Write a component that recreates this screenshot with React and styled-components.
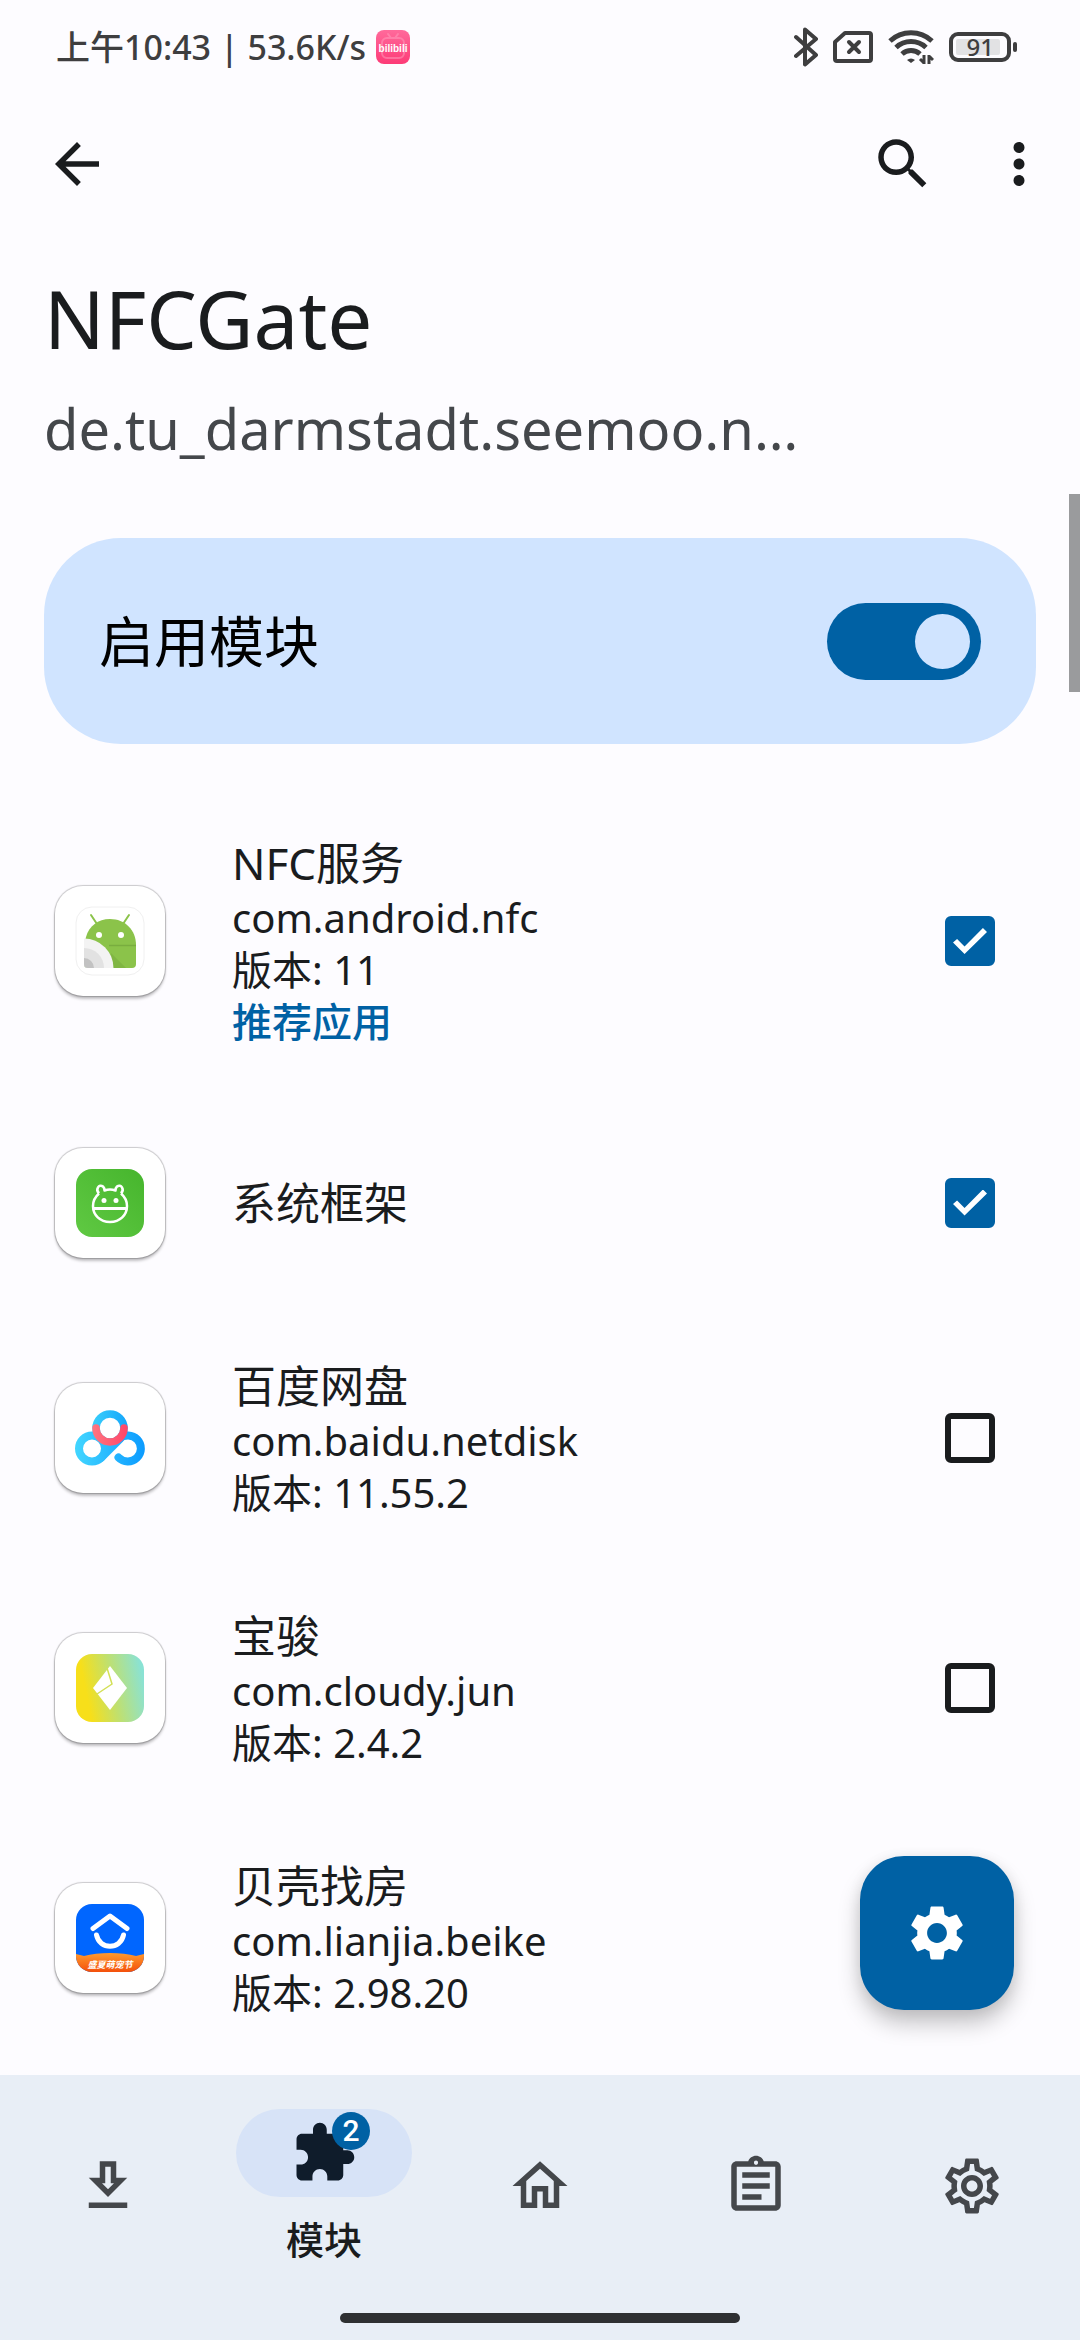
import React, { useState } from 'react';
import styled, { createGlobalStyle, css } from 'styled-components';

const color = {
  surface: '#fdfcff',
  text: '#1a1c1e',
  muted: '#44474b',
  primary: '#0061a4',
  container: '#d0e4ff',
  nav: '#e8eef6',
  pill: '#d7e3f7',
};

const GlobalStyle = createGlobalStyle`
  *, *::before, *::after { box-sizing: border-box; }
  body {
    margin: 0;
    background: ${color.surface};
    color: ${color.text};
    font-family: "Noto Sans", "Noto Sans CJK SC", sans-serif;
  }
  button { border: 0; padding: 0; background: none; font: inherit; color: inherit; cursor: pointer; }
  h1, h2, p, ul { margin: 0; padding: 0; }
`;

const Screen = styled.div`
  min-height: 100vh;
  display: flex;
  flex-direction: column;
`;

const StatusBar = styled.div`
  height: 94px;
  padding: 0 63px 0 56px;
  display: flex;
  align-items: center;
  justify-content: space-between;
  color: #3e3e3f;
`;

const StatusGroup = styled.div`
  display: flex;
  align-items: center;
  gap: ${(p) => p.$gap}px;
  font-size: 34px;
  line-height: 40px;
  font-weight: 500;
  white-space: nowrap;
`;

const Battery = styled.div`
  display: flex;
  align-items: center;
  gap: 2px;
  &::after {
    content: '';
    width: 4px;
    height: 10px;
    border-radius: 2px;
    background: currentColor;
  }
`;

const BatteryCell = styled.div`
  width: 62px;
  height: 30px;
  border: 4px solid currentColor;
  border-radius: 9px;
  padding: 3px;
  display: flex;
`;

const BatteryLevel = styled.div`
  width: 44px;
  border-radius: 2px;
  background: #e2e2e4;
  display: flex;
  align-items: center;
  justify-content: flex-end;
  padding-right: 6px;
  font-size: 24px;
  line-height: 16px;
`;

const Toolbar = styled.div`
  height: 140px;
  padding: 0 28px 0 44px;
  display: flex;
  align-items: center;
  gap: 50px;
`;

const IconButton = styled.button`
  width: 66px;
  height: 66px;
  display: grid;
  place-items: center;
  ${(p) => p.$first && css`margin-right: auto;`}
`;

const Glyph = styled.svg`
  width: 66px;
  height: 66px;
  display: block;
  fill: currentColor;
`;

const Heading = styled.header`
  padding: 38px 44px 0;
  display: flex;
  flex-direction: column;
  gap: 28px;
`;

const Title = styled.h1`
  font-size: 80px;
  line-height: 92px;
  font-weight: 400;
`;

const Subtitle = styled.p`
  font-size: 56px;
  line-height: 72px;
  color: ${color.muted};
`;

const Main = styled.main`
  position: relative;
  flex: 1;
  display: flex;
  flex-direction: column;
`;

const EnableCard = styled.label`
  margin: 74px 44px 46px;
  height: 206px;
  padding: 0 55px;
  border-radius: 77px;
  background: ${color.container};
  color: #000;
  display: flex;
  align-items: center;
  justify-content: space-between;
  font-size: 55px;
  line-height: 64px;
  cursor: pointer;
`;

const Switch = styled.input`
  appearance: none;
  margin: 0;
  width: 154px;
  height: 77px;
  padding: 11px;
  border-radius: 39px;
  background: #74777f;
  display: flex;
  cursor: pointer;
  &::before {
    content: '';
    width: 55px;
    height: 55px;
    border-radius: 50%;
    background: ${color.container};
  }
  &:checked {
    background: ${color.primary};
    justify-content: flex-end;
  }
`;

const AppList = styled.ul`
  list-style: none;
`;

const AppRow = styled.label`
  min-height: 221px;
  padding: 44px 85px 44px 55px;
  display: flex;
  align-items: center;
  cursor: pointer;
`;

const AppTile = styled.div`
  width: 110px;
  height: 110px;
  margin-right: 67px;
  border-radius: 28px;
  background: #fff;
  display: grid;
  place-items: center;
  box-shadow: 0 0 1px 1px rgba(0, 0, 0, 0.2), 0 3px 3px rgba(0, 0, 0, 0.24);
`;

const AppArt = styled.svg`
  width: 68px;
  height: 68px;
  display: block;
  overflow: visible;
`;

const AppInfo = styled.div`
  flex: 1;
  min-width: 0;
  display: flex;
  flex-direction: column;
`;

const AppName = styled.h2`
  font-size: 44px;
  line-height: 58px;
  font-weight: 400;
`;

const AppLine = styled.p`
  font-size: 40px;
  line-height: 52px;
  ${(p) => p.$recommended && css`
    color: ${color.primary};
    font-weight: 500;
  `}
`;

const Checkbox = styled.input`
  appearance: none;
  margin: 0;
  width: 50px;
  height: 50px;
  border: 6px solid ${color.text};
  border-radius: 6px;
  display: grid;
  place-items: center;
  cursor: pointer;
  &:checked {
    border-color: ${color.primary};
    background: ${color.primary};
  }
  &:checked::before {
    content: '';
    width: 34px;
    height: 26px;
    background: #fff;
    clip-path: polygon(0 56%, 12% 42%, 34% 71%, 88% 0, 100% 15%, 34% 100%);
  }
`;

const ScrollThumb = styled.div`
  position: absolute;
  top: 30px;
  right: 0;
  width: 11px;
  height: 198px;
  background: #9a9b9d;
`;

const Fab = styled.button`
  && {
    position: absolute;
    right: 66px;
    bottom: 65px;
    width: 154px;
    height: 154px;
    border-radius: 44px;
    background: ${color.primary};
    color: #fff;
    display: grid;
    place-items: center;
    box-shadow: 0 14px 22px rgba(0, 0, 0, 0.22), 0 2px 14px rgba(0, 0, 0, 0.08);
  }
`;

const BottomBar = styled.footer`
  background: ${color.nav};
  padding-bottom: 17px;
  display: flex;
  flex-direction: column;
  align-items: center;
`;

const Tabs = styled.nav`
  width: 100%;
  height: 238px;
  display: grid;
  grid-template-columns: repeat(5, 1fr);
`;

const Tab = styled.button`
  && {
    height: 222px;
    color: ${(p) => (p.$active ? color.text : color.muted)};
    display: flex;
    flex-direction: column;
    align-items: center;
    justify-content: center;
    gap: 18px;
    font-size: 38px;
    line-height: 48px;
    font-weight: 500;
  }
`;

const Pill = styled.span`
  position: relative;
  width: 176px;
  height: 88px;
  border-radius: 44px;
  background: ${color.pill};
  color: #0f1c2b;
  display: grid;
  place-items: center;
`;

const Badge = styled.span`
  position: absolute;
  top: 3px;
  left: 96px;
  width: 38px;
  height: 38px;
  border-radius: 50%;
  background: ${color.primary};
  color: #fff;
  font-family: Roboto, sans-serif;
  font-size: 30px;
  line-height: 38px;
  text-align: center;
`;

const HomeIndicator = styled.div`
  width: 400px;
  max-width: 40%;
  height: 10px;
  border-radius: 5px;
  background: #2e3032;
`;

const paths = {
  back: 'M20 11H7.83l5.59-5.59L12 4l-8 8 8 8 1.41-1.41L7.83 13H20v-2z',
  search:
    'M15.5 14h-.79l-.28-.27C15.41 12.59 16 11.11 16 9.5 16 5.91 13.09 3 9.5 3S3 5.91 3 9.5 5.91 16 9.5 16c1.61 0 3.09-.59 4.23-1.57l.27.28v.79l5 4.99L20.49 19l-4.99-5zm-6 0C7.01 14 5 11.99 5 9.5S7.01 5 9.5 5 14 7.01 14 9.5 11.99 14 9.5 14z',
  more:
    'M12 8c1.1 0 2-.9 2-2s-.9-2-2-2-2 .9-2 2 .9 2 2 2zm0 2c-1.1 0-2 .9-2 2s.9 2 2 2 2-.9 2-2-.9-2-2-2zm0 6c-1.1 0-2 .9-2 2s.9 2 2 2 2-.9 2-2-.9-2-2-2z',
  gear:
    'M19.14 12.94c.04-.3.06-.61.06-.94 0-.32-.02-.64-.07-.94l2.03-1.58c.18-.14.23-.41.12-.61l-1.92-3.32c-.12-.22-.37-.29-.59-.22l-2.39.96c-.5-.38-1.03-.7-1.62-.94l-.36-2.54c-.04-.24-.24-.41-.48-.41h-3.84c-.24 0-.43.17-.47.41l-.36 2.54c-.59.24-1.13.57-1.62.94l-2.39-.96c-.22-.08-.47 0-.59.22L2.74 8.87c-.12.21-.08.47.12.61l2.03 1.58c-.05.3-.09.63-.09.94s.02.64.07.94l-2.03 1.58c-.18.14-.23.41-.12.61l1.92 3.32c.12.22.37.29.59.22l2.39-.96c.5.38 1.03.7 1.62.94l.36 2.54c.05.24.24.41.48.41h3.84c.24 0 .44-.17.47-.41l.36-2.54c.59-.24 1.13-.56 1.62-.94l2.39.96c.22.08.47 0 .59-.22l1.92-3.32c.12-.22.07-.47-.12-.61l-2.01-1.58zM12 15.6c-1.98 0-3.6-1.62-3.6-3.6s1.62-3.6 3.6-3.6 3.6 1.62 3.6 3.6-1.62 3.6-3.6 3.6z',
  download: 'M19 9h-4V3H9v6H5l7 7 7-7zm-8 2V5h2v6h1.17L12 13.17 9.83 11H11zm-6 7h14v2H5z',
  extension:
    'M20.5 11H19V7c0-1.1-.9-2-2-2h-4V3.5C13 2.12 11.88 1 10.5 1S8 2.12 8 3.5V5H4c-1.1 0-1.99.9-1.99 2v3.8H3.5c1.49 0 2.7 1.21 2.7 2.7s-1.21 2.7-2.7 2.7H2V20c0 1.1.9 2 2 2h3.8v-1.5c0-1.49 1.21-2.7 2.7-2.7 1.49 0 2.7 1.21 2.7 2.7V22H17c1.1 0 2-.9 2-2v-4h1.5c1.38 0 2.5-1.12 2.5-2.5S21.88 11 20.5 11z',
  home: 'M12 5.69l5 4.5V18h-2v-6H9v6H7v-7.81l5-4.5M12 3L2 12h3v8h6v-6h2v6h6v-8h3L12 3z',
  logs:
    'M7 15h7v2H7zm0-4h10v2H7zm0-4h10v2H7zm12-4h-4.18C14.4 1.84 13.3 1 12 1c-1.3 0-2.4.84-2.82 2H5c-1.1 0-2 .9-2 2v14c0 1.1.9 2 2 2h14c1.1 0 2-.9 2-2V5c0-1.1-.9-2-2-2zm-7-.25c.41 0 .75.34.75.75s-.34.75-.75.75-.75-.34-.75-.75.34-.75.75-.75zM19 19H5V5h14v14z',
  gearOutline:
    'M19.43 12.98c.04-.32.07-.64.07-.98 0-.34-.03-.66-.07-.98l2.11-1.65c.19-.15.24-.42.12-.64l-2-3.46c-.09-.16-.26-.25-.44-.25-.06 0-.12.01-.17.03l-2.49 1c-.52-.4-1.08-.73-1.69-.98l-.38-2.65C14.46 2.18 14.25 2 14 2h-4c-.25 0-.46.18-.49.42l-.38 2.65c-.61.25-1.17.59-1.69.98l-2.49-1c-.06-.02-.12-.03-.18-.03-.17 0-.34.09-.43.25l-2 3.46c-.13.22-.07.49.12.64l2.11 1.65c-.04.32-.07.65-.07.98 0 .33.03.66.07.98l-2.11 1.65c-.19.15-.24.42-.12.64l2 3.46c.09.16.26.25.44.25.06 0 .12-.01.17-.03l2.49-1c.52.4 1.08.73 1.69.98l.38 2.65c.03.24.24.42.49.42h4c.25 0 .46-.18.49-.42l.38-2.65c.61-.25 1.17-.59 1.69-.98l2.49 1c.06.02.12.03.18.03.17 0 .34-.09.43-.25l2-3.46c.12-.22.07-.49-.12-.64l-2.11-1.65zm-1.98-1.71c.04.31.05.52.05.73 0 .21-.02.43-.05.73l-.14 1.13.89.7 1.08.84-.7 1.21-1.27-.51-1.04-.42-.9.68c-.43.32-.84.56-1.25.73l-1.06.43-.16 1.13-.2 1.35h-1.4l-.19-1.35-.16-1.13-1.06-.43c-.43-.18-.83-.41-1.23-.71l-.91-.7-1.06.43-1.27.51-.7-1.21 1.08-.84.89-.7-.14-1.13c-.03-.31-.05-.54-.05-.74s.02-.43.05-.73l.14-1.13-.89-.7-1.08-.84.7-1.21 1.27.51 1.04.42.9-.68c.43-.32.84-.56 1.25-.73l1.06-.43.16-1.13.2-1.35h1.39l.19 1.35.16 1.13 1.06.43c.43.18.83.41 1.23.71l.91.7 1.06-.43 1.27-.51.7 1.21-1.07.85-.89.7.14 1.13zM12 8c-2.21 0-4 1.79-4 4s1.79 4 4 4 4-1.79 4-4-1.79-4-4-4zm0 6c-1.1 0-2-.9-2-2s.9-2 2-2 2 .9 2 2-.9 2-2 2z',
};

const Icon = ({ name }) => (
  <Glyph viewBox="0 0 24 24" aria-hidden="true">
    <path d={paths[name]} />
  </Glyph>
);

const BilibiliIcon = () => (
  <svg width="34" height="34" viewBox="0 0 34 34" aria-hidden="true">
    <defs>
      <linearGradient id="bili" x1="0" y1="0" x2="0" y2="1">
        <stop offset="0" stopColor="#ff6a9b" />
        <stop offset="1" stopColor="#fd3b77" />
      </linearGradient>
    </defs>
    <rect width="34" height="34" rx="8" fill="url(#bili)" />
    <g fill="none" stroke="#ff9fbf" strokeWidth="2" opacity="0.5" strokeLinecap="round">
      <rect x="6" y="8" width="22" height="20" rx="5" />
      <path d="M12 4l3 4M22 4l-3 4" />
    </g>
    <text x="17" y="22" fill="#fff" fontSize="10" fontWeight="700" textAnchor="middle" fontFamily="Liberation Sans, sans-serif">
      bilibili
    </text>
  </svg>
);

const BluetoothIcon = () => (
  <svg width="24" height="40" viewBox="0 0 24 40" fill="none" stroke="currentColor" strokeWidth="4" strokeLinecap="round" strokeLinejoin="round" aria-hidden="true">
    <path d="M2 10l20 18-11 9.500V2.500L22 12 2 29" />
  </svg>
);

const NoSimIcon = () => (
  <svg width="40" height="32" viewBox="0 0 40 32" fill="none" stroke="currentColor" strokeWidth="4" strokeLinejoin="round" aria-hidden="true">
    <path d="M12 2h24a2 2 0 0 1 2 2v24a2 2 0 0 1-2 2H4a2 2 0 0 1-2-2V11z" />
    <path d="M16 11l10 10M26 11L16 21" strokeLinecap="round" />
  </svg>
);

const WifiIcon = () => (
  <svg width="46" height="36" viewBox="0 0 46 36" fill="none" stroke="currentColor" strokeWidth="5" aria-hidden="true">
    <path d="M2 12a31 31 0 0 1 42 0" />
    <path d="M8 18.500a22 22 0 0 1 30 0" />
    <path d="M14 25a13.500 13.500 0 0 1 18 0" />
    <path d="M19 31a6 6 0 0 1 8 0l-4 3z" fill="currentColor" stroke="none" />
    <path d="M36 26v9M41 35v-9M36 34l-4-4M41 27l4 4" strokeWidth="3" />
  </svg>
);

const NfcArt = () => (
  <AppArt viewBox="0 0 68 68" aria-hidden="true">
    <rect x="0" y="0" width="68" height="68" rx="16" fill="#fff" stroke="#f0f0f0" />
    <path d="M15 8l6 9M53 8l-6 9" stroke="#8bc34a" strokeWidth="2" strokeLinecap="round" />
    <path d="M10 30C13 19 22 12 34 12c15 0 26 11 26 26v19a4 4 0 0 1-4 4H12a4 4 0 0 1-4-4V38z" fill="#8bc34a" />
    <path d="M33 38.500h27" stroke="#79ad3f" strokeWidth="1.500" />
    <path d="M35 46l15 15H36z" fill="#79ad3f" opacity="0.6" />
    <path d="M8 31.500A29.500 29.500 0 0 1 37.500 61H12a4 4 0 0 1-4-4z" fill="#f3f3f3" />
    <path d="M8 41a20 20 0 0 1 20 20H12a4 4 0 0 1-4-4z" fill="#e2e2e2" />
    <path d="M8 51a10 10 0 0 1 10 10h-6a4 4 0 0 1-4-4z" fill="#c2c2c2" />
    <circle cx="23" cy="28" r="3" fill="#fff" />
    <circle cx="45" cy="28" r="3" fill="#fff" />
  </AppArt>
);

const SystemArt = () => (
  <AppArt viewBox="0 0 68 68" aria-hidden="true">
    <defs>
      <linearGradient id="system" x1="0" y1="1" x2="1" y2="0">
        <stop offset="0" stopColor="#60c943" />
        <stop offset="1" stopColor="#46b52d" />
      </linearGradient>
    </defs>
    <rect width="68" height="68" rx="16" fill="url(#system)" />
    <g fill="none" stroke="#fff" strokeWidth="2.500">
      <path d="M23 24.500C19 28 17 32 17 37c0 9 7 16 17 16s17-7 17-16c0-5-2-9-6-12.500" />
      <path d="M23 24.500c-4-4 0-10 4-7 1 1 1.500 2 1.500 4 4-1.500 7-1.500 11 0 0-2 .5-3 1.500-4 4-3 8 3 4 7" strokeLinejoin="round" />
      <path d="M17 39.500h34" strokeWidth="3" />
    </g>
    <circle cx="28" cy="31.500" r="2.500" fill="#fff" />
    <circle cx="40" cy="31.500" r="2.500" fill="#fff" />
  </AppArt>
);

const NetdiskArt = () => (
  <AppArt viewBox="0 0 68 68" fill="none" aria-hidden="true">
    <defs>
      <linearGradient id="cloud" x1="-1" y1="0" x2="69" y2="0" gradientUnits="userSpaceOnUse">
        <stop offset="0" stopColor="#42d6ff" />
        <stop offset="1" stopColor="#0b9bff" />
      </linearGradient>
      <linearGradient id="ring" x1="16" y1="0" x2="52" y2="0" gradientUnits="userSpaceOnUse">
        <stop offset="0" stopColor="#3ad0fb" />
        <stop offset="1" stopColor="#14a5fb" />
      </linearGradient>
      <linearGradient id="smile" x1="16" y1="0" x2="52" y2="0" gradientUnits="userSpaceOnUse">
        <stop offset="0" stopColor="#ff7580" />
        <stop offset="1" stopColor="#ff4568" />
      </linearGradient>
    </defs>
    <g stroke="url(#cloud)" strokeWidth="8" strokeLinecap="round">
      <circle cx="16" cy="44.500" r="13" />
      <path d="M25 54l19-19" />
      <path d="M42.500 53.500A13 13 0 1 0 43 35" />
    </g>
    <circle cx="34" cy="24" r="14" fill="#fff" stroke="url(#ring)" strokeWidth="7.500" />
    <path d="M20 24a14 14 0 0 0 28 0" stroke="url(#smile)" strokeWidth="7.500" strokeLinecap="round" />
  </AppArt>
);

const BaojunArt = () => (
  <AppArt viewBox="0 0 68 68" aria-hidden="true">
    <defs>
      <linearGradient id="baojun" x1="0" y1="0.600" x2="1" y2="0.400">
        <stop offset="0.150" stopColor="#f7df1a" />
        <stop offset="0.550" stopColor="#bfe070" />
        <stop offset="1" stopColor="#8ae2d4" />
      </linearGradient>
    </defs>
    <rect width="68" height="68" rx="16" fill="url(#baojun)" />
    <path d="M34 12l17 22-17 22-17-22z" fill="#fff" />
    <path d="M31 14l5 16-15 10" fill="none" stroke="#d3e056" strokeWidth="1.500" />
  </AppArt>
);

const BeikeArt = () => (
  <AppArt viewBox="0 0 68 68" aria-hidden="true">
    <defs>
      <clipPath id="beike-clip">
        <rect width="68" height="68" rx="16" />
      </clipPath>
      <linearGradient id="beike-band" x1="0" y1="0" x2="0" y2="1">
        <stop offset="0" stopColor="#ff9a2e" />
        <stop offset="1" stopColor="#f4500b" />
      </linearGradient>
    </defs>
    <g clipPath="url(#beike-clip)">
      <rect width="68" height="68" fill="#0066ff" />
      <path d="M0 50l8 2c14-4 38-4 52 0l8-2v18H0z" fill="url(#beike-band)" />
    </g>
    <g fill="none" stroke="#fff" strokeWidth="5" strokeLinecap="round" strokeLinejoin="round">
      <path d="M17 24.500L34 12l17 12.500" />
      <path d="M20.500 31c3 15 24 15 27 0" />
    </g>
    <text x="34" y="63.500" fill="#fff" fontSize="9" fontWeight="700" fontStyle="italic" textAnchor="middle" fontFamily="Noto Sans CJK SC, sans-serif">
      盛夏萌宠节
    </text>
  </AppArt>
);

const apps = [
  { name: 'NFC服务', pkg: 'com.android.nfc', version: '11', recommended: true, enabled: true, Art: NfcArt },
  { name: '系统框架', enabled: true, Art: SystemArt },
  { name: '百度网盘', pkg: 'com.baidu.netdisk', version: '11.55.2', Art: NetdiskArt },
  { name: '宝骏', pkg: 'com.cloudy.jun', version: '2.4.2', Art: BaojunArt },
  { name: '贝壳找房', pkg: 'com.lianjia.beike', version: '2.98.20', Art: BeikeArt },
];

const tabs = [
  { icon: 'download', title: '仓库' },
  { icon: 'extension', title: '模块', badge: 2 },
  { icon: 'home', title: '主页' },
  { icon: 'logs', title: '日志' },
  { icon: 'gearOutline', title: '设置' },
];

export default function App() {
  const [active, setActive] = useState('extension');

  return (
    <Screen>
      <GlobalStyle />
      <StatusBar>
        <StatusGroup $gap={10}>
          <span>上午10:43 | 53.6K/s</span>
          <BilibiliIcon />
        </StatusGroup>
        <StatusGroup $gap={15}>
          <BluetoothIcon />
          <NoSimIcon />
          <WifiIcon />
          <Battery>
            <BatteryCell>
              <BatteryLevel>91</BatteryLevel>
            </BatteryCell>
          </Battery>
        </StatusGroup>
      </StatusBar>
      <Toolbar>
        <IconButton $first aria-label="返回"><Icon name="back" /></IconButton>
        <IconButton aria-label="搜索"><Icon name="search" /></IconButton>
        <IconButton aria-label="更多"><Icon name="more" /></IconButton>
      </Toolbar>
      <Heading>
        <Title>NFCGate</Title>
        <Subtitle>de.tu_darmstadt.seemoo.n…</Subtitle>
      </Heading>
      <Main>
        <EnableCard>
          启用模块
          <Switch type="checkbox" role="switch" defaultChecked />
        </EnableCard>
        <AppList>
          {apps.map(({ name, pkg, version, recommended, enabled, Art }) => (
            <li key={name}>
              <AppRow>
                <AppTile><Art /></AppTile>
                <AppInfo>
                  <AppName>{name}</AppName>
                  {pkg && <AppLine>{pkg}</AppLine>}
                  {version && <AppLine>版本: {version}</AppLine>}
                  {recommended && <AppLine $recommended>推荐应用</AppLine>}
                </AppInfo>
                <Checkbox type="checkbox" defaultChecked={enabled} />
              </AppRow>
            </li>
          ))}
        </AppList>
        <ScrollThumb />
        <Fab aria-label="模块设置"><Icon name="gear" /></Fab>
      </Main>
      <BottomBar>
        <Tabs>
          {tabs.map(({ icon, title, badge }) => (
            <Tab key={icon} $active={icon === active} aria-label={title} onClick={() => setActive(icon)}>
              {icon === active ? (
                <>
                  <Pill>
                    <Icon name={icon} />
                    {badge && <Badge>{badge}</Badge>}
                  </Pill>
                  <span>{title}</span>
                </>
              ) : (
                <Icon name={icon} />
              )}
            </Tab>
          ))}
        </Tabs>
        <HomeIndicator />
      </BottomBar>
    </Screen>
  );
}
